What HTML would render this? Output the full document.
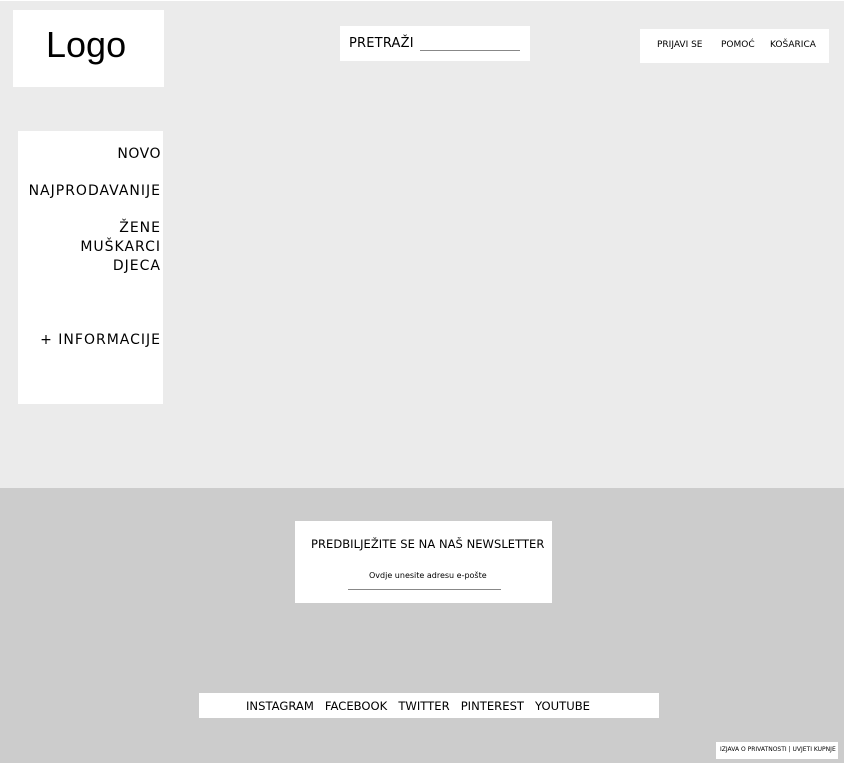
<!DOCTYPE html>
<html><head><meta charset="utf-8"><style>
body{margin:0;width:845px;height:763px;position:relative;font-family:"DejaVu Sans","Liberation Sans",sans-serif;color:#000;overflow:hidden;background:#fff}
.top{position:absolute;left:0;top:1px;width:844px;height:487px;background:#ebebeb}
.bot{position:absolute;left:0;top:488px;width:844px;height:275px;background:#cccccc}
.b{position:absolute;background:#fff}
.t{position:absolute;white-space:nowrap}
.s{right:684px;font-size:14px;text-align:right;line-height:19px;letter-spacing:1px}
</style></head><body>
<div class="top"></div><div class="bot"></div>
<div class="b" style="left:13px;top:10px;width:151px;height:77px"></div>
<div class="t" style="left:46px;top:24px;font-size:36px;font-family:'Liberation Sans',sans-serif">Logo</div>
<div class="b" style="left:340px;top:26px;width:190px;height:35px"></div>
<div class="t" style="left:349px;top:36px;font-size:13px;letter-spacing:0.2px">PRETRAŽI</div>
<div style="position:absolute;left:420px;top:50px;width:100px;height:1px;background:#888"></div>
<div class="b" style="left:640px;top:29px;width:189px;height:34px"></div>
<div class="t" style="left:657px;top:40px;font-size:9px">PRIJAVI SE</div>
<div class="t" style="left:721px;top:40px;font-size:9px">POMOĆ</div>
<div class="t" style="left:770px;top:40px;font-size:9px">KOŠARICA</div>
<div class="b" style="left:18px;top:131px;width:145px;height:273px"></div>
<div class="t s" style="top:145px;letter-spacing:0.5px">NOVO</div>
<div class="t s" style="top:182px">NAJPRODAVANIJE</div>
<div class="t s" style="top:219px">ŽENE<br>MUŠKARCI<br>DJECA</div>
<div class="t s" style="top:331px">+ INFORMACIJE</div>
<div class="b" style="left:295px;top:521px;width:257px;height:82px"></div>
<div class="t" style="left:311px;top:537px;font-size:11.5px;letter-spacing:0.05px">PREDBILJEŽITE SE NA NAŠ NEWSLETTER</div>
<div class="t" style="left:369px;top:571px;font-size:8px">Ovdje unesite adresu e-pošte</div>
<div style="position:absolute;left:348px;top:589px;width:153px;height:1px;background:#888"></div>
<div class="b" style="left:199px;top:693px;width:460px;height:25px"></div>
<div class="t" style="left:246px;top:699px;font-size:11.6px">INSTAGRAM&nbsp;&nbsp; FACEBOOK&nbsp;&nbsp; TWITTER&nbsp;&nbsp; PINTEREST&nbsp;&nbsp; YOUTUBE</div>
<div class="b" style="left:716px;top:742px;width:122px;height:17px"></div>
<div class="t" style="left:720px;top:746px;font-size:6px">IZJAVA O PRIVATNOSTI | UVJETI KUPNJE</div>
</body></html>
